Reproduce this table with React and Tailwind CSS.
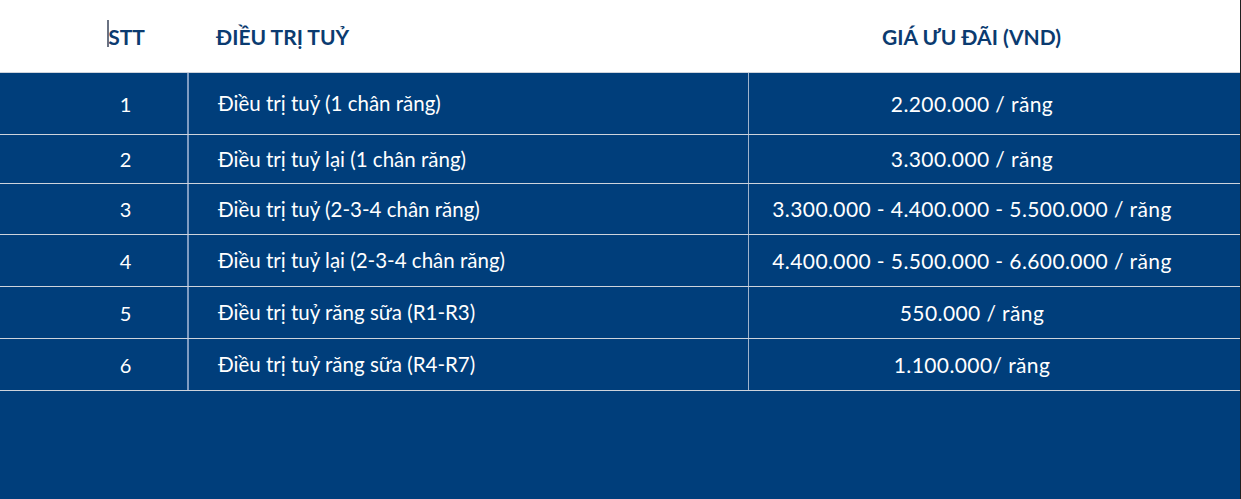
import React from "react"

const rows = [
  { stt: "1", name: "Điều trị tuỷ (1 chân răng)", price: "2.200.000 / răng", h: "h-[62px]" },
  { stt: "2", name: "Điều trị tuỷ lại (1 chân răng)", price: "3.300.000 / răng", h: "h-[49px]" },
  { stt: "3", name: "Điều trị tuỷ (2-3-4 chân răng)", price: "3.300.000 - 4.400.000 - 5.500.000 / răng", h: "h-[51px]" },
  { stt: "4", name: "Điều trị tuỷ lại (2-3-4 chân răng)", price: "4.400.000 - 5.500.000 - 6.600.000 / răng", h: "h-[52px]" },
  { stt: "5", name: "Điều trị tuỷ răng sữa (R1-R3)", price: "550.000 / răng", h: "h-[52px]" },
  { stt: "6", name: "Điều trị tuỷ răng sữa (R4-R7)", price: "1.100.000/ răng", h: "h-[52px]" },
]

export default function App(){
  return (
    <div className="w-[1241px] h-[499px] flex bg-white overflow-hidden" style={{ fontFamily: "Lato, 'Open Sans', sans-serif" }}>
      <div className="w-[1240px] flex flex-col">
        {/* header */}
        <div className="h-[72px] pt-[2px] flex items-center text-[21px] font-bold text-[#0b3b70] uppercase">
          <div className="w-[189px] pl-[64px] text-center">
            <span className="relative">
              <span className="absolute left-[-1px] top-[-4px] w-[2px] h-[27px] bg-gray-500" />
              STT
            </span>
          </div>
          <div className="w-[559px] pl-[27px]">Điều trị tuỷ</div>
          <div className="flex-1 pr-[45px] text-center">Giá ưu đãi (VND)</div>
        </div>

        {/* body */}
        <div className="flex-1 bg-[#003e7b] border-t border-[#cdd3dc] text-white text-[20px]">
          {rows.map(r => (
            <div key={r.stt} className={`${r.h} flex border-b border-[#cdd3dc]`}>
              <div className="w-[189px] pl-[64px] flex items-center justify-center border-r-2 border-[#7f9cc2]">{r.stt}</div>
              <div className="w-[560px] pl-[29px] flex items-center border-r border-[#9fb3cc] text-[20.5px]">{r.name}</div>
              <div className="flex-1 pr-[45px] flex items-center justify-center text-[21px] tracking-[0.4px]">{r.price}</div>
            </div>
          ))}
        </div>
      </div>
      <div className="w-px bg-[#1f1f1f]" />
    </div>
  )
}
